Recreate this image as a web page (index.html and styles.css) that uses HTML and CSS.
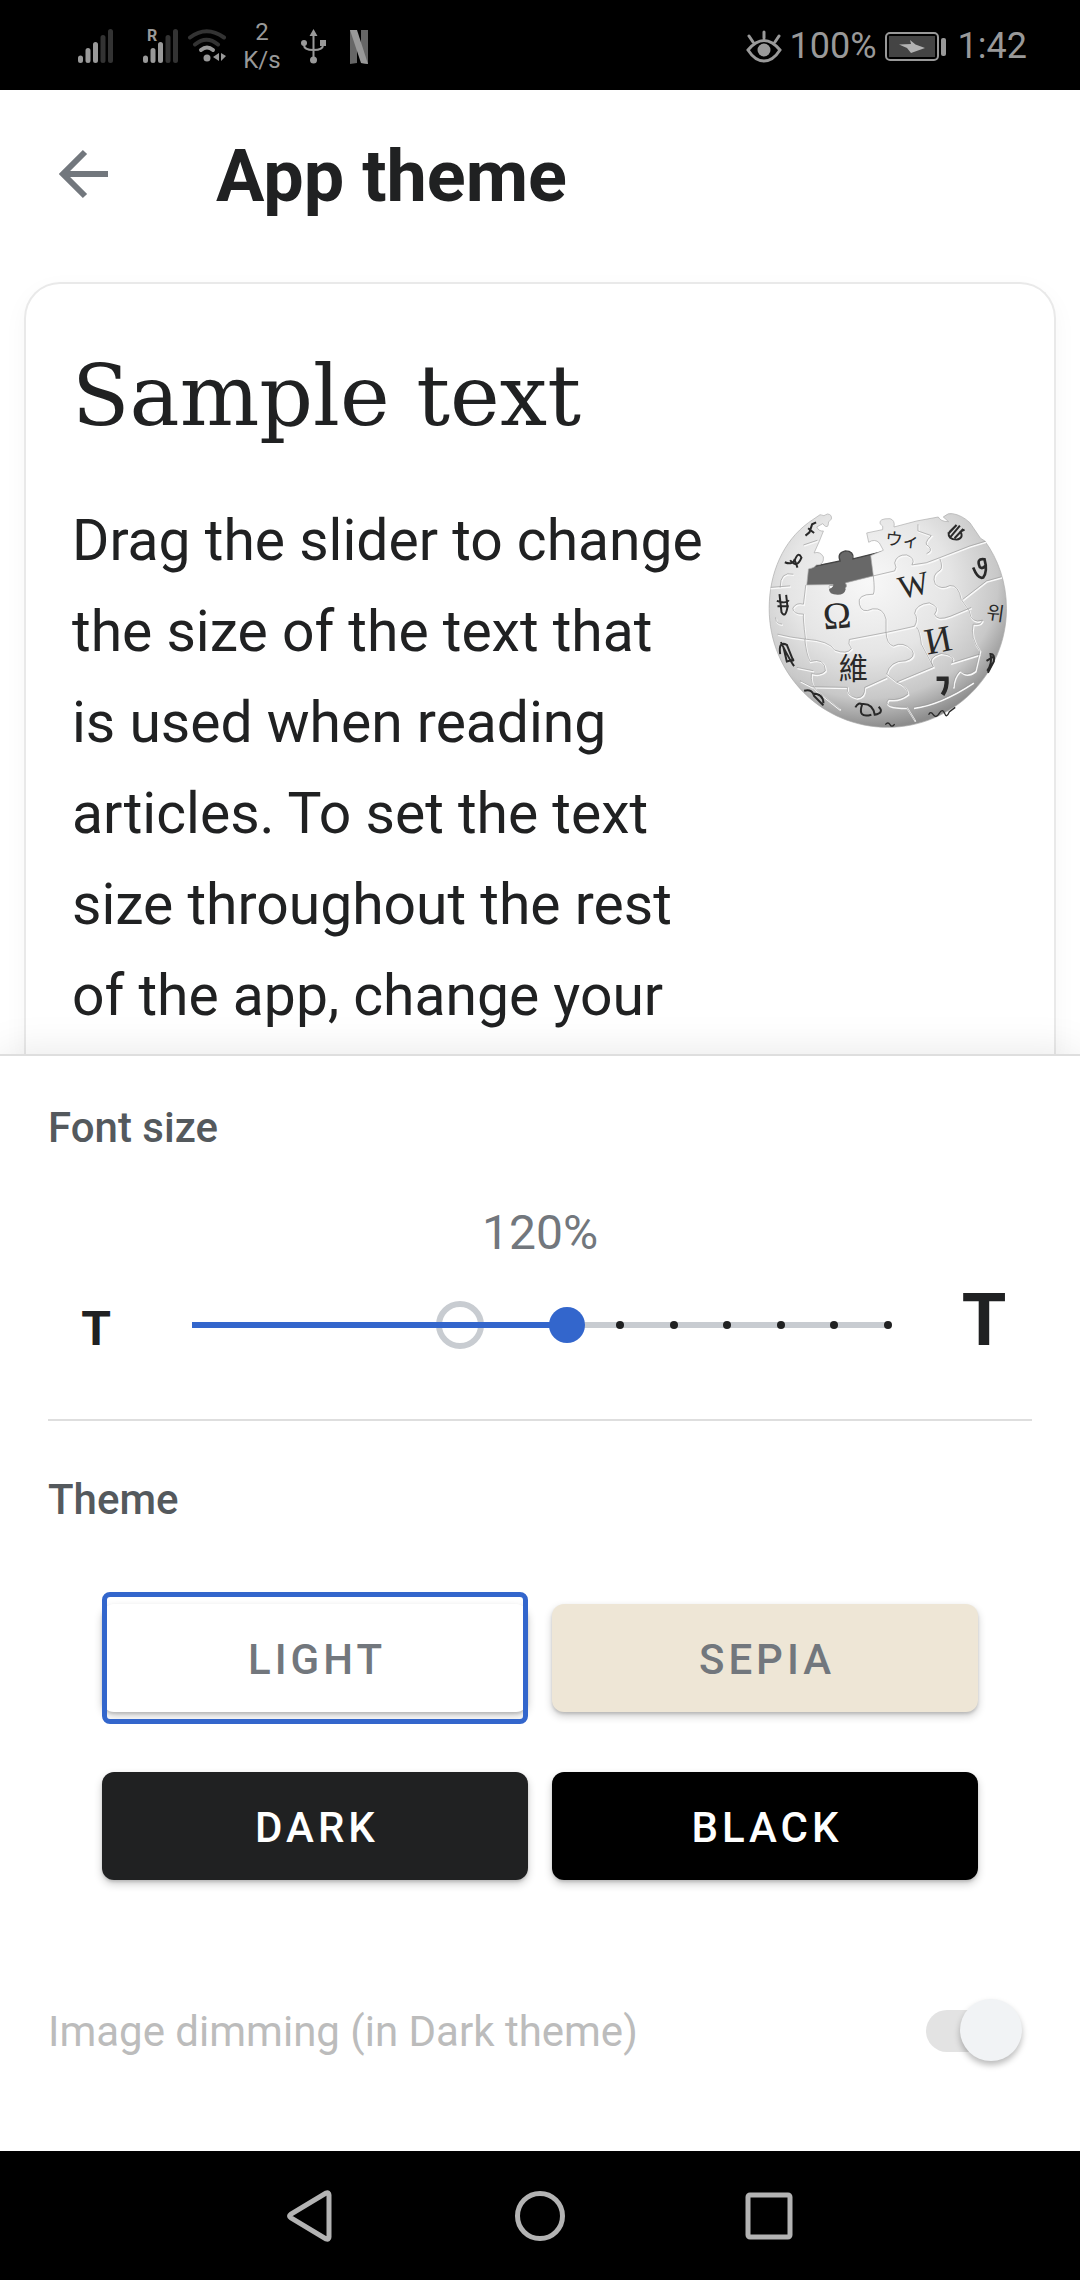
FILE: index.html
```html
<!DOCTYPE html>
<html lang="en">
<head>
<meta charset="utf-8">
<meta name="viewport" content="width=device-width, initial-scale=1">
<title>App theme</title>
<link rel="stylesheet" href="styles.css">
</head>
<body>
<div class="status-bar">
  <div class="status-group">
    <svg class="signal" width="57" height="40" viewBox="0 0 57 40" aria-label="Mobile signal">
      <g stroke-width="5" stroke-linecap="round"><path stroke="#999" d="M2.5 32v2.500M10 24.500v10M17.500 18.500v16"/><path stroke="#333" d="M25 11.500v23M32.500 5.500v29"/></g>
    </svg>
    <svg class="signal" width="36" height="40" viewBox="0 0 36 40" aria-label="Roaming signal">
      <g stroke-width="5" stroke-linecap="round"><path stroke="#999" d="M2.500 32v2.500M10 24.500v10M17.500 18.500v16"/><path stroke="#333" d="M25 11.500v23M32.500 5.500v29"/></g>
      <text class="roaming" x="4" y="15">R</text>
    </svg>
    <svg width="44" height="40" viewBox="0 0 44 40" fill="none" aria-label="Wi-Fi">
      <g stroke-width="4" stroke-linecap="round"><path stroke="#333" d="M3 11.500Q19.500-1 37 11.500M8 18.500Q19.500 9 31 18.500"/><path stroke="#999" d="M14 24q6-5 12 0"/></g>
      <circle cx="20" cy="32" r="3.500" fill="#999"/><path fill="#999" d="M32 27v8l-6-4zM34 27v8l5-5z"/>
    </svg>
    <span class="net-speed">2<br>K/s</span>
    <svg width="40" height="40" viewBox="0 0 40 40" fill="none" stroke="#999" stroke-width="2" aria-label="USB">
      <path d="M20.500 8v25M11 15v4q0 5 9.500 5M30 15v4q0 5-9.500 5"/><circle cx="20.500" cy="34" r="3.500" fill="#999" stroke="none"/><circle cx="11" cy="17" r="3" fill="#999" stroke="none"/><path fill="#999" stroke="none" d="M27 14h6v6h-6zM20.500 3l4 7h-8z"/>
    </svg>
    <svg width="36" height="40" viewBox="0 0 36 40" aria-label="Netflix">
      <path fill="#666" d="M9 4h7v33l-7 1zM20 4h7v34l-7-1z"/><path fill="#999" d="M9 4h7l11 34-7-1z"/>
    </svg>
  </div>
  <div class="status-group">
    <svg width="36" height="40" viewBox="0 0 36 40" fill="none" stroke="#999" stroke-width="3" stroke-linecap="round" aria-label="Eye comfort">
      <path d="M2 24Q10 14.500 18 14.500T34 24Q27 35 18 35T2 24zM18 6v6M3 10l4 6M33 10l-4 6"/><circle cx="18" cy="24" r="6.500" fill="#999" stroke="none"/>
    </svg>
    <span>100%</span>
    <svg width="61" height="40" viewBox="0 0 61 40" aria-label="Charging">
      <rect x="1" y="7" width="52" height="27" rx="4" fill="none" stroke="#999" stroke-width="2"/><rect x="4" y="10" width="46" height="21" fill="#444"/><rect x="56" y="12" width="5" height="18" rx="2" fill="#999"/><path fill="#b3b3b3" d="M25 14l5.500 4.500L40 22l-14 5-4-5-8-3.500 12-.5z"/>
    </svg>
    <time class="clock">1:42</time>
  </div>
</div>

<header class="app-bar">
  <button class="back" type="button" aria-label="Navigate up">
    <svg width="52" height="50" viewBox="0 0 52 50" fill="none" stroke="#72777d" stroke-width="6"><path d="M50 25H6M27 3L5 25l22 22"/></svg>
  </button>
  <h1>App theme</h1>
</header>

<main class="preview">
  <article class="card">
    <h2>Sample text</h2>
    <div class="card-body">
      <p>Drag the slider to change the size of the text that is used when reading articles. To set the text size throughout the rest of the app, change your</p>
      <svg class="globe" width="240" height="217" viewBox="84 63 720 652" role="img" aria-label="Wikipedia globe">
        <defs>
          <radialGradient id="shade" cx=".42" cy=".32" r=".68"><stop offset="0" stop-color="#f8f8f8"/><stop offset=".5" stop-color="#e5e5e5"/><stop offset=".8" stop-color="#c8c8c8"/><stop offset="1" stop-color="#8d8d8d"/></radialGradient>
          <clipPath id="ball"><circle cx="443" cy="353" r="357"/></clipPath>
        </defs>
        <path fill="#686868" d="M196 230L300 210q-10-24 16-30 26 0 23 24l92-24-16 90-90 12q8 32-22 34-34-6-22-32l-85 2z"/>
        <path fill="none" stroke="#444" stroke-width="4" d="M204 230L300 210q-10-24 16-30 26 0 23 24l88-22"/>
        <path fill="url(#shade)" stroke="#aaa" stroke-width="2" d="M200 282L205 234Q226 230 228 222 252 224 250 198 240 180 222 186L238 150 250 120Q236 122 230 108L248 98Q258 112 264 104 262 92 274 84 276 70 262 69 252 78 240 71L205 95C130 150 87 245 87 353 87 552 247 710 443 710S800 552 800 353C800 275 775 205 735 150L722 142 690 95Q665 72 638 68 626 64 610 78L626 92Q602 92 595 78L530 90 462 108Q466 88 450 83 416 82 420 98 432 104 428 116L380 126 386 154Q404 142 418 156L430 178 392 194 400 255 316 276Q324 286 314 294 294 282 270 294 260 282 280 281z"/>
        <path fill="#686868" d="M281 270h32q-5 14 4 25-4 17-24 17-28-2-26-18 17-4 14-24z"/>
        <g clip-path="url(#ball)" fill="none">
          <g id="seams" stroke="#f9f9f9" stroke-width="5" transform="translate(2 3)">
            <path id="cuts" d="M400 255Q405 300 400 310 350 310 358 340 364 370 398 354 430 350 438 385V425M438 425Q510 410 524 406 536 384 524 368 528 340 568 336 602 348 584 370 590 392 632 376L694 350M400 255L464 240Q472 230 464 216 470 190 500 192 528 202 516 222 560 220 600 200L690 165 740 150M600 204Q610 230 600 238 574 252 586 280 604 298 630 284 656 282 664 326L688 360Q694 400 728 388M438 425L328 446Q322 458 334 474 320 492 284 478 268 450 196 445 150 440 112 430M196 445Q188 380 190 370 158 370 158 352 168 334 190 340L197 282M438 425Q440 460 460 466 490 450 516 478 530 500 496 510 450 510 440 550L470 574Q500 584 504 610 480 630 446 626 424 650 500 650L525 690M194 445Q198 490 210 512 254 500 256 540 240 556 214 548 210 580 230 600L300 656M440 560L374 590Q376 620 350 622 318 614 322 590L215 588 180 570M470 574L580 528Q560 500 604 488 650 494 636 516L720 490M728 388Q724 404 700 400 690 440 720 480L706 540Q680 560 660 540 640 560 640 590M560 188Q580 180 566 166 548 160 574 134L534 120V100M520 650Q600 640 700 574M530 410Q540 420 544 460L580 528M86 290L150 285M126 400Q108 400 106 380M220 540L170 530M668 326L740 270 784 258M160 250Q120 240 120 290M190 162L232 148"/>
          </g>
          <use href="#cuts" stroke="#999" stroke-width="2"/>
        </g>
        <g fill="#292929" class="glyphs">
          <text x="252" y="416" font-size="114" transform="rotate(-5 252 416)">Ω</text>
          <text x="483" y="325" font-size="98" transform="rotate(-13 483 325)">W</text>
          <text x="562" y="492" font-size="112" transform="rotate(-11 562 492)">И</text>
          <text x="296" y="566" font-size="88" class="han">維</text>
          <text x="434" y="160" font-size="52" transform="rotate(6 434 160)" class="han">ウィ</text>
          <text x="738" y="384" font-size="58" transform="rotate(8 738 384)" class="han">위</text>
        </g>
        <g fill="none" stroke="#292929" stroke-width="8">
          <path stroke-width="13" d="M590 564h30q2 28-12 48"/>
          <path d="M700 230q14 36 30 30 14-20 4-55-26-4-14 24 8 6 16-4"/>
          <path stroke-width="6" d="M626 128l24-26M632 138l28-34M644 142l26-28M626 124q-2 22 24 22 22-4 12-24l12-6M650 102l-22 22M110 330q28 10 36-2M118 310l6 54q12 20 18-16l-4-36M112 346h34M122 454q30 60 40 72M120 490q-6-40 20-28l20 50M130 470l10 42 22-6M192 600q26-6 30 16l28 28M216 608q34 0 34 30M346 650q10-18 20-8-14 42 28 30M364 640q34-4 40 32 30-6 12-24M196 134l12-10 8-24 12-6M204 112l18 14M134 214q24 10 30-10M150 208q20 26 34-8-10-20-20 8l8 22M742 540q16-20 10-50 14 0 10 22l-18 34M740 510l20-12"/>
          <path stroke-width="4" d="M566 672q6-12 14 0t18-4 16 0 14-4l18-14M436 702q8-10 14 0t14-2"/>
        </g>
      </svg>
    </div>
  </article>
</main>

<section class="settings">
  <h3 id="font-label">Font size</h3>
  <output class="percent" for="font-size">120%</output>
  <div class="size-row">
    <button class="size-button" type="button" aria-label="Smaller text">T</button>
    <div class="slider">
      <div class="slider-art">
        <div class="slider-ring"></div>
        <div class="slider-fill"></div>
        <div class="slider-ticks"><i></i><i></i><i></i><i></i><i></i><i></i></div>
      </div>
      <input id="font-size" type="range" min="-5" max="8" value="2" aria-labelledby="font-label">
    </div>
    <button class="size-button large" type="button" aria-label="Larger text">T</button>
  </div>
  <hr>
  <h3>Theme</h3>
  <div class="themes">
    <button class="theme light selected" type="button" aria-pressed="true">LIGHT</button>
    <button class="theme sepia" type="button" aria-pressed="false">SEPIA</button>
    <button class="theme dark" type="button" aria-pressed="false">DARK</button>
    <button class="theme black" type="button" aria-pressed="false">BLACK</button>
  </div>
  <div class="dimming">
    <label for="dim">Image dimming (in Dark theme)</label>
    <input id="dim" class="switch" type="checkbox" role="switch" checked disabled>
  </div>
</section>

<nav class="nav-bar" aria-label="System navigation">
  <button type="button" aria-label="Back"><svg width="56" height="56" viewBox="0 0 56 56"><path d="M46 7v42q0 3-3 2L8 30q-3-2 0-4L43 5q3-1 3 2z"/></svg></button>
  <button type="button" aria-label="Home"><svg width="56" height="56" viewBox="0 0 56 56"><circle cx="28" cy="28" r="22.500"/></svg></button>
  <button type="button" aria-label="Recent apps"><svg width="56" height="56" viewBox="0 0 56 56"><rect x="7" y="7" width="42" height="42" rx="2"/></svg></button>
</nav>
</body>
</html>
```
FILE: styles.css
```css
* { box-sizing: border-box; }
body {
  margin: 0;
  min-height: 100vh;
  display: flex;
  flex-direction: column;
  background: #fff;
  color: #202122;
  font-family: Roboto, "Noto Sans", sans-serif;
}
h1, h2, h3, p { margin: 0; }
button {
  padding: 0;
  border: 0;
  background: none;
  color: inherit;
  font-family: inherit;
}
svg { display: block; flex: none; }

/* System status bar */
.status-bar {
  height: 90px;
  padding: 2px 53px 0 78px;
  display: flex;
  justify-content: space-between;
  background: #000;
  color: #999;
  font-size: 36px;
}
.status-group { display: flex; align-items: center; gap: 8px; }
.signal { fill: none; overflow: visible; }
.roaming { font: bold 16px Roboto, sans-serif; fill: #999; }
.net-speed { width: 46px; font-size: 24px; line-height: 28px; text-align: center; }
.clock { padding-left: 4px; }

/* Title bar */
.app-bar {
  height: 168px;
  padding: 0 58px;
  display: flex;
  align-items: center;
  gap: 106px;
}
h1 { padding-top: 6px; font-size: 72px; line-height: 84px; font-weight: 700; }

/* Article preview */
.preview {
  flex: 1;
  padding: 24px 24px 0;
  display: flex;
  overflow: hidden;
}
.card {
  flex: 1;
  padding: 62px 46px 0;
  border: 2px solid #e9e9e9;
  border-bottom: 0;
  border-radius: 36px 36px 0 0;
  box-shadow: 0 8px 24px #0000000a;
}
h2 { font: 400 84px/100px "DejaVu Serif", serif; }
.card-body { margin-top: 49px; display: flex; gap: 64px; }
.card-body p { flex: 1; font-size: 57px; line-height: 91px; }
.globe { margin-top: 17px; }
.glyphs { font-family: "Liberation Serif", serif; }
.han { font-family: "Noto Sans CJK TC", sans-serif; }

/* Settings sheet */
.settings {
  position: relative;
  padding: 48px 48px 88px;
  border-top: 2px solid #dedede;
  background: #fff;
  box-shadow: 0 0 40px #0000001a;
}
h3 { font-size: 42px; line-height: 48px; font-weight: 500; color: #54595d; }
.percent {
  display: block;
  margin: 53px 0 24px;
  font-size: 48px;
  line-height: 56px;
  text-align: center;
  color: #72777d;
}
.size-row {
  height: 74px;
  display: grid;
  grid-template-columns: 96px 1fr 96px;
  gap: 30px;
  align-items: baseline;
}
.size-button { font-size: 48px; line-height: 72px; font-weight: 700; }
.size-button.large { font-size: 72px; }
.slider {
  height: 48px;
  align-self: center;
  display: grid;
  align-items: center;
}
.slider > * { grid-area: 1 / 1; }
.slider-art { position: relative; height: 6px; margin: 0 18px; background: #c8ccd1; }
.slider-ring {
  position: absolute;
  left: calc(500% / 13);
  top: 50%;
  width: 48px;
  height: 48px;
  border: 6px solid #c8ccd1;
  border-radius: 50%;
  transform: translate(-50%, -50%);
}
.slider-fill { position: absolute; inset: 0 calc(600% / 13) 0 0; background: #36c; }
.slider-ticks {
  position: absolute;
  inset: -1px -4px -1px calc(800% / 13 - 4px);
  display: flex;
  justify-content: space-between;
}
.slider-ticks i { width: 8px; height: 8px; border-radius: 50%; background: #202122; }
.slider input {
  position: relative;
  width: 100%;
  height: 48px;
  margin: 0;
  appearance: none;
  background: none;
}
.slider input::-webkit-slider-thumb {
  appearance: none;
  width: 36px;
  height: 36px;
  border-radius: 50%;
  background: #36c;
}
hr { height: 2px; margin: 60px 0 55px; border: 0; background: #dedede; }
.themes {
  margin: 80px 54px 119px;
  display: grid;
  grid-template-columns: 1fr 1fr;
  gap: 60px 24px;
}
.theme {
  position: relative;
  height: 108px;
  padding: 2px 0 0 4px;
  border-radius: 12px;
  box-shadow: 0 4px 8px #0003, 0 2px 3px #0002;
  font-size: 42px;
  font-weight: 500;
  letter-spacing: 4px;
}
.light { background: #fff; color: #72777d; }
.sepia { background: #eee6d6; color: #72777d; }
.dark { background: #202122; color: #fff; }
.black { background: #000; color: #fff; }
.selected::after {
  content: "";
  position: absolute;
  inset: -12px 0;
  border: 5px solid #36c;
  border-radius: 8px;
}
.dimming {
  height: 64px;
  padding-right: 10px;
  display: flex;
  align-items: center;
  justify-content: space-between;
  font-size: 42px;
  color: #bcbcbc;
}
.switch {
  position: relative;
  width: 96px;
  height: 42px;
  margin: 0;
  appearance: none;
}
.switch::before {
  content: "";
  position: absolute;
  inset: 0 14px 0 0;
  border-radius: 21px;
  background: #e3e3e3;
}
.switch::after {
  content: "";
  position: absolute;
  right: 0;
  top: -11px;
  width: 62px;
  height: 62px;
  border-radius: 50%;
  background: #f1f3f5;
  box-shadow: 0 4px 6px #0004;
}

/* System navigation */
.nav-bar {
  height: 129px;
  display: flex;
  align-items: center;
  justify-content: center;
  gap: 173px;
  background: #000;
}
.nav-bar svg { fill: none; stroke: #b3b3b3; stroke-width: 5; }
```
